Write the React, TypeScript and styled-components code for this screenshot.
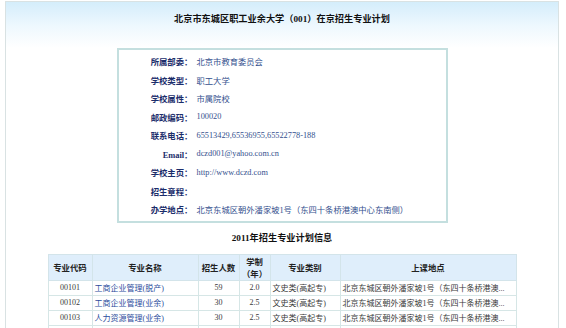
import React from 'react';
import styled, { createGlobalStyle } from 'styled-components';

const GlobalStyle = createGlobalStyle`
  html, body {
    margin: 0;
    padding: 0;
    background: #ffffff;
  }
  body {
    font-family: "Liberation Serif", "Noto Sans CJK SC", serif;
  }
`;

const cjk = `"Noto Sans CJK SC", "Liberation Sans", sans-serif`;
const mixed = `"Liberation Serif", "Noto Sans CJK SC", serif`;

const info = [
  { label: '所属部委：', value: '北京市教育委员会' },
  { label: '学校类型：', value: '职工大学' },
  { label: '学校属性：', value: '市属院校' },
  { label: '邮政编码：', value: '100020' },
  { label: '联系电话：', value: '65513429,65536955,65522778-188' },
  { label: 'Email：', value: 'dczd001@yahoo.com.cn', latin: true },
  { label: '学校主页：', value: 'http://www.dczd.com' },
  { label: '招生章程：', value: '' },
  { label: '办学地点：', value: '北京东城区朝外潘家坡1号（东四十条桥港澳中心东南侧）' },
];

const address = '北京东城区朝外潘家坡1号（东四十条桥港澳...';

const majors = [
  { code: '00101', name: '工商企业管理(脱产)', count: 59, years: '2.0', kind: '文史类(高起专)' },
  { code: '00102', name: '工商企业管理(业余)', count: 30, years: '2.5', kind: '文史类(高起专)' },
  { code: '00103', name: '人力资源管理(业余)', count: 30, years: '2.5', kind: '文史类(高起专)' },
  { code: '00104', name: '会计(业余)', count: 30, years: '2.5', kind: '文史类(高起专)' },
];

const Page = styled.div`
  padding: 1px 7px 0 5px;
  height: 100vh;
  box-sizing: border-box;
  overflow: hidden;
`;

const Frame = styled.div`
  border: 1px solid #d9e2e3;
  border-bottom: none;
  min-height: 100%;
  box-sizing: border-box;
  background: linear-gradient(#d4edfb 0px, #eef8fe 24px, #ffffff 46px);
`;

const Title = styled.h1`
  margin: 0;
  height: 34px;
  line-height: 34px;
  text-align: center;
  font-family: ${mixed};
  font-size: 9.2px;
  font-weight: bold;
  color: #111;
`;

const InfoBox = styled.div`
  width: 331px;
  margin: 12px auto 0;
  box-sizing: border-box;
  border: 2px solid #c4dfdf;
  padding: 2px 0;
  background: #ffffff;
`;

const InfoRow = styled.div`
  display: grid;
  grid-template-columns: 74px 1fr;
  column-gap: 4px;
  height: 18.5px;
  align-items: center;
`;

const Label = styled.span<{ $latin?: boolean }>`
  text-align: right;
  font-family: ${(p) => (p.$latin ? mixed : cjk)};
  font-size: 8.4px;
  font-weight: bold;
  color: #1b2d6b;
  white-space: nowrap;
`;

const Value = styled.span`
  font-family: ${mixed};
  font-size: 8.3px;
  color: #34508e;
  white-space: nowrap;
`;

const SectionTitle = styled.h2`
  margin: 0;
  height: 31px;
  line-height: 31px;
  text-align: center;
  font-family: ${mixed};
  font-size: 9.2px;
  font-weight: bold;
  color: #111;
`;

const Table = styled.table`
  width: 468px;
  margin: 0 auto;
  border-collapse: collapse;
  table-layout: fixed;
  font-family: ${mixed};
  font-size: 8px;
`;

const Th = styled.th`
  height: 25px;
  padding: 0;
  background: #dfeefb;
  border: 1px solid #d3e4ea;
  font-family: ${cjk};
  font-size: 8.4px;
  font-weight: bold;
  line-height: 12px;
  color: #222;
  text-align: center;
  white-space: nowrap;
`;

const Td = styled.td<{ $align?: 'left' | 'center' }>`
  height: 14px;
  padding: 0 2px;
  border: 1px solid #d6e6e6;
  text-align: ${(p) => p.$align ?? 'center'};
  color: #3a3a3a;
  white-space: nowrap;
  overflow: hidden;
`;

const NameLink = styled.a`
  color: #2c4d9c;
  text-decoration: none;
`;

export default function App() {
  return (
    <>
      <GlobalStyle />
      <Page>
        <Frame>
          <Title>北京市东城区职工业余大学（001）在京招生专业计划</Title>
          <InfoBox>
            {info.map((row) => (
              <InfoRow key={row.label}>
                <Label $latin={row.latin}>{row.label}</Label>
                <Value>{row.value}</Value>
              </InfoRow>
            ))}
          </InfoBox>
          <SectionTitle>2011年招生专业计划信息</SectionTitle>
          <Table>
            <colgroup>
              <col style={{ width: 44 }} />
              <col style={{ width: 106 }} />
              <col style={{ width: 41 }} />
              <col style={{ width: 31 }} />
              <col style={{ width: 70 }} />
              <col style={{ width: 176 }} />
            </colgroup>
            <thead>
              <tr>
                <Th>专业代码</Th>
                <Th>专业名称</Th>
                <Th>招生人数</Th>
                <Th>
                  学制
                  <br />
                  （年）
                </Th>
                <Th>专业类别</Th>
                <Th>上课地点</Th>
              </tr>
            </thead>
            <tbody>
              {majors.map((m) => (
                <tr key={m.code}>
                  <Td>{m.code}</Td>
                  <Td $align="left">
                    <NameLink href="#">{m.name}</NameLink>
                  </Td>
                  <Td>{m.count}</Td>
                  <Td>{m.years}</Td>
                  <Td $align="left">{m.kind}</Td>
                  <Td $align="left">{address}</Td>
                </tr>
              ))}
            </tbody>
          </Table>
        </Frame>
      </Page>
    </>
  );
}
